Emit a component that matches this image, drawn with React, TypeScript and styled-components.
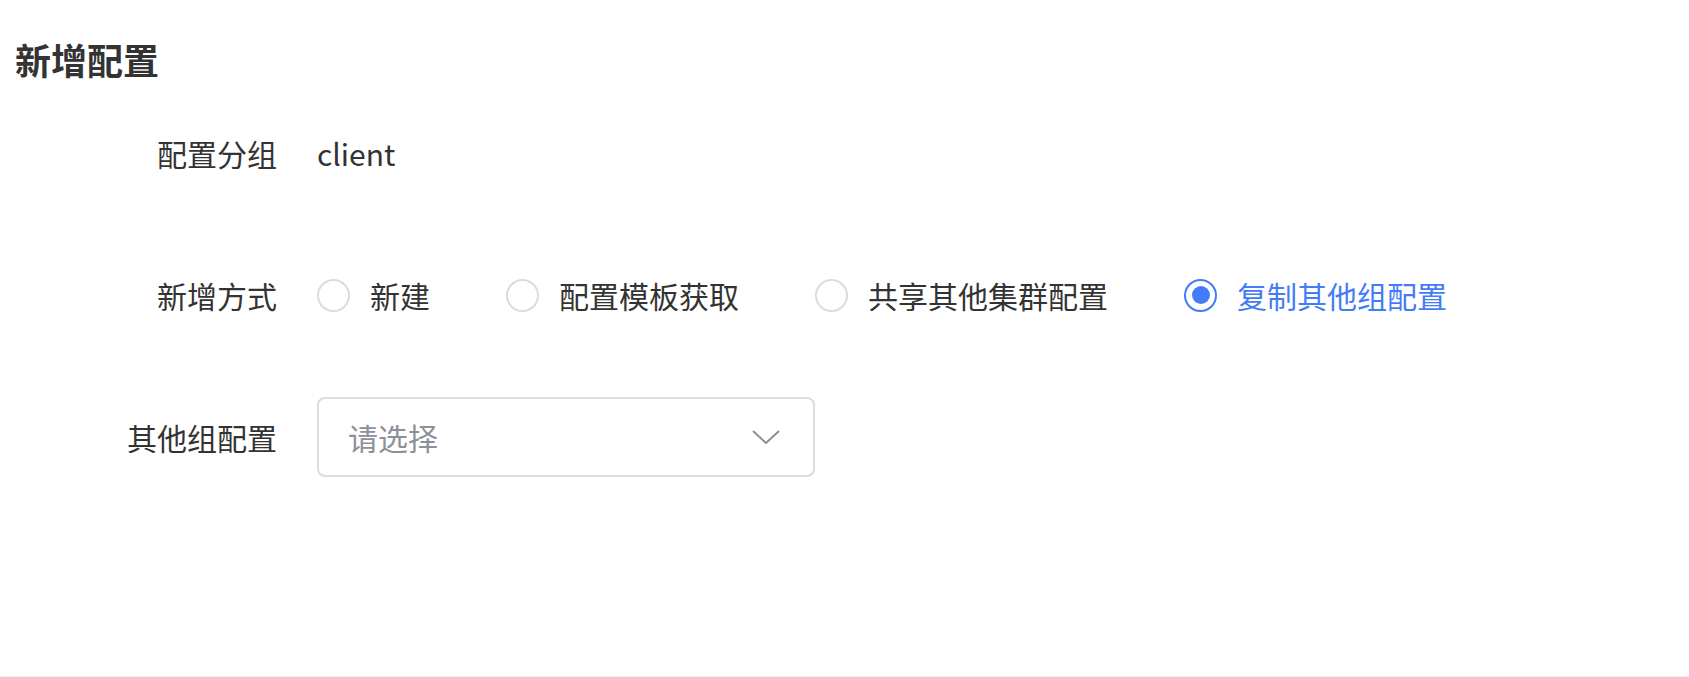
import React, { useState } from 'react';
import styled, { createGlobalStyle } from 'styled-components';

const GlobalStyle = createGlobalStyle`
  html, body {
    margin: 0;
    padding: 0;
    background: #fff;
  }
  body {
    font-family: 'Noto Sans CJK SC', 'Noto Sans', sans-serif;
    color: #333;
  }
`;

const MODES = ['新建', '配置模板获取', '共享其他集群配置', '复制其他组配置'];

const App = () => {
  const [mode, setMode] = useState<string>('复制其他组配置');

  return (
    <>
      <GlobalStyle />
      <Page>
        <Title>新增配置</Title>
        <Form>
          <FormItem>
            <Label>配置分组</Label>
            <Value>client</Value>
          </FormItem>

          <FormItem>
            <Label>新增方式</Label>
            <RadioGroup>
              {MODES.map((m) => (
                <RadioOption key={m} $checked={mode === m} onClick={() => setMode(m)}>
                  <RadioCircle $checked={mode === m} />
                  <span>{m}</span>
                </RadioOption>
              ))}
            </RadioGroup>
          </FormItem>

          <FormItem>
            <Label>其他组配置</Label>
            <SelectBox>
              <Placeholder>请选择</Placeholder>
              <svg width="28" height="14" viewBox="0 0 28 14" fill="none">
                <path d="M1 1 L14 13 L27 1" stroke="#8c9099" strokeWidth="2" />
              </svg>
            </SelectBox>
          </FormItem>
        </Form>
      </Page>
    </>
  );
};

const Page = styled.div`
  height: 677px;
  box-sizing: border-box;
  padding: 34px 15px 0;
  border-bottom: 1px solid #f0f0f0;
`;

const Title = styled.h2`
  margin: 0;
  font-size: 36px;
  line-height: 50px;
  font-weight: 700;
  color: #333;
`;

const Form = styled.div`
  margin-top: 29px;
  display: flex;
  flex-direction: column;
  gap: 62px;
`;

const FormItem = styled.div`
  display: flex;
  align-items: center;
  height: 80px;
`;

const Label = styled.label`
  width: 262px;
  flex-shrink: 0;
  text-align: right;
  font-size: 30px;
  color: #333;
  margin-right: 40px;
`;

const Value = styled.div`
  font-size: 30px;
  color: #333;
`;

const RadioGroup = styled.div`
  display: flex;
  align-items: center;
`;

const RadioOption = styled.div<{ $checked: boolean }>`
  display: flex;
  align-items: center;
  gap: 20px;
  margin-right: 76px;
  font-size: 30px;
  cursor: pointer;
  color: ${(p) => (p.$checked ? '#437cf6' : '#333')};
`;

const RadioCircle = styled.span<{ $checked: boolean }>`
  width: 33px;
  height: 33px;
  box-sizing: border-box;
  border-radius: 50%;
  border: 2px solid ${(p) => (p.$checked ? '#437cf6' : '#dcdcdc')};
  display: flex;
  align-items: center;
  justify-content: center;

  &::after {
    content: '';
    width: 18px;
    height: 18px;
    border-radius: 50%;
    background: #437cf6;
    display: ${(p) => (p.$checked ? 'block' : 'none')};
  }
`;

const SelectBox = styled.div`
  width: 498px;
  height: 80px;
  box-sizing: border-box;
  border: 2px solid #dcdcdc;
  border-radius: 8px;
  display: flex;
  align-items: center;
  justify-content: space-between;
  padding: 0 33px 0 29px;
  cursor: pointer;
`;

const Placeholder = styled.span`
  font-size: 30px;
  color: #8c9099;
`;

export default App;
